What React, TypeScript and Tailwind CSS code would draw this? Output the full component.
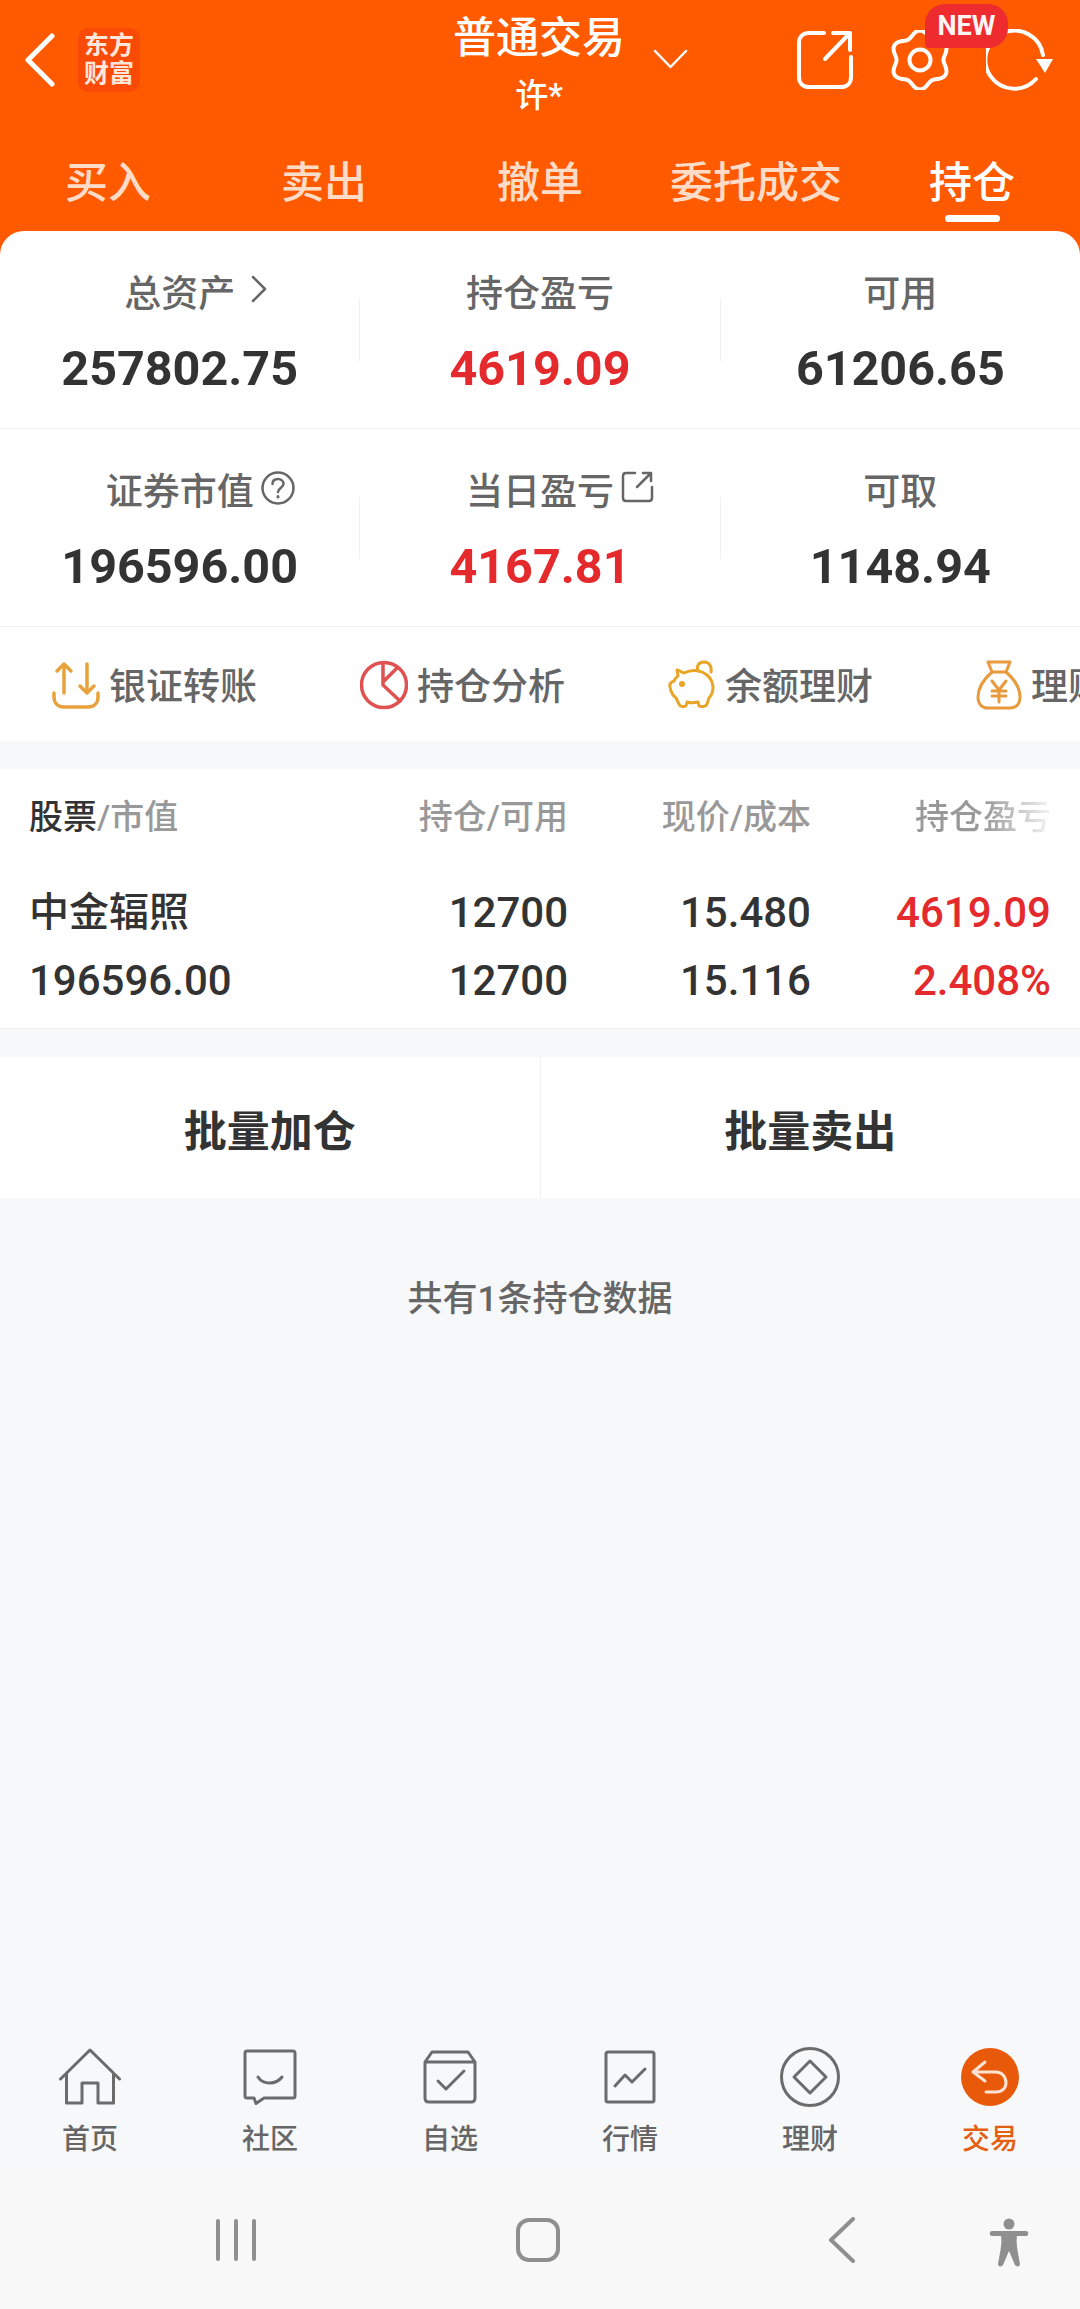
import React from 'react';

const gearPath = (() => {
  const pts: string[] = [];
  for (let i = 0; i <= 120; i++) {
    const t = (i / 120) * Math.PI * 2;
    const r = 26.5 + 3 * Math.cos(6 * t);
    pts.push(`${(31 + r * Math.sin(t)).toFixed(2)} ${(30 - r * Math.cos(t)).toFixed(2)}`);
  }
  return 'M' + pts.join('L') + 'Z';
})();

function Stat({ label, value, red, icon }: { label: string; value: string; red?: boolean; icon?: React.ReactNode }) {
  return (
    <div className="flex-1 flex flex-col items-center pt-[10px]">
      <div className="relative h-[50px] leading-[50px] text-[37px] font-medium text-[#666]">
        {label}
        {icon}
      </div>
      <div className={`mt-[19px] h-[60px] leading-[60px] text-[48.5px] font-bold ${red ? 'text-[#e42a2c]' : 'text-[#333]'}`}>{value}</div>
    </div>
  );
}

function StatRow({ items }: { items: { label: string; value: string; red?: boolean; icon?: React.ReactNode }[] }) {
  return (
    <div className="h-[198px] flex items-center border-b border-[#eeeeee]">
      <Stat {...items[0]} />
      <div className="w-px h-[62px] bg-[#f1f1f1]" />
      <Stat {...items[1]} />
      <div className="w-px h-[62px] bg-[#f1f1f1]" />
      <Stat {...items[2]} />
    </div>
  );
}

function Action({ icon, label }: { icon: React.ReactNode; label: string }) {
  return (
    <div className="flex items-center shrink-0 w-[202px]">
      {icon}
      <span className="ml-[9px] mt-[5px] text-[37px] leading-[48px] text-[#666] font-medium whitespace-nowrap">{label}</span>
    </div>
  );
}

function NavItem({ icon, label, active }: { icon: React.ReactNode; label: string; active?: boolean }) {
  return (
    <div className="flex-1 flex flex-col items-center pt-[2px]">
      <div className="h-[60px] flex items-center justify-center">{icon}</div>
      <div className={`mt-[15px] text-[28px] leading-[36px] font-medium ${active ? 'text-[#e45f12]' : 'text-[#666]'}`}>{label}</div>
    </div>
  );
}

const stroke = { fill: 'none', stroke: '#6b6b6b', strokeWidth: 3, strokeLinecap: 'round', strokeLinejoin: 'round' } as const;

export default function App() {
  return (
    <div className="w-[1080px] h-[2309px] flex flex-col overflow-hidden bg-[#f7f8fa] font-['Roboto','Noto_Sans_CJK_SC',sans-serif]">
      {/* header */}
      <div className="bg-[#ff5a00] h-[231px] shrink-0 text-white">
        <div className="h-[120px] grid grid-cols-[455px_168px_457px]">
          <div className="flex items-center pl-[25px]">
            <svg width="30" height="54" viewBox="0 0 30 54" fill="none" stroke="#fff" strokeWidth="5" strokeLinecap="round" strokeLinejoin="round">
              <path d="M27 3L3 27L27 51" />
            </svg>
            <div className="ml-[23px] w-[62px] h-[64px] rounded-[10px] bg-[#f94a08] flex flex-col items-center justify-center text-[#ffe6da] text-[25px] leading-[28px] font-bold font-['Liberation_Serif','Noto_Sans_CJK_SC',serif]">
              <span>东方</span>
              <span>财富</span>
            </div>
          </div>
          <div className="flex flex-col items-center pt-[13px]">
            <div className="text-[43px] leading-[50px] font-medium whitespace-nowrap">普通交易</div>
            <div className="mt-[13px] text-[33px] leading-[40px] font-medium">许*</div>
          </div>
          <div className="flex items-center">
            <svg className="ml-[30px] mb-[2px]" width="35" height="20" viewBox="0 0 35 20" fill="none" stroke="#fff" strokeWidth="2.5" strokeLinecap="round" strokeLinejoin="round">
              <path d="M2 2L17.5 18L33 2" />
            </svg>
            <svg className="ml-[109px]" width="56" height="60" viewBox="0 0 56 60" fill="none" stroke="#fff" strokeWidth="4" strokeLinecap="round" strokeLinejoin="round">
              <path d="M27 3H12C6 3 2 7 2 13V47C2 53 6 57 12 57H44C50 57 54 53 54 47V27" />
              <path d="M28 29L53 3M36 3H53V20" />
            </svg>
            <svg className="ml-[36px]" width="62" height="60" viewBox="0 0 62 60" fill="none" stroke="#fff" strokeWidth="4">
              <path d={gearPath} strokeLinejoin="round" />
              <circle cx="31" cy="30" r="10.5" />
            </svg>
            <svg className="ml-[35px]" width="68" height="62" viewBox="0 0 68 62" fill="none">
              <path d="M50 50A29 29 0 1 1 57 26" stroke="#fff" strokeWidth="4" strokeLinecap="round" />
              <path d="M50 30H67L59 44Z" fill="#fff" />
            </svg>
            <div className="absolute left-[925px] top-[4px] w-[83px] h-[44px] rounded-[20px] rounded-bl-[4px] bg-[#ee2b2f] flex items-center justify-center text-[27px] font-bold text-[#fff4f4]">NEW</div>
          </div>
        </div>
        <div className="h-[111px] flex">
          {['买入', '卖出', '撤单', '委托成交', '持仓'].map((t, i) => (
            <div key={t} className="flex-1 flex flex-col items-center pt-[37px]">
              <div className={`text-[43px] leading-[52px] font-medium whitespace-nowrap ${i === 4 ? 'text-white' : 'text-[#ffdcc8]'}`}>{t}</div>
              {i === 4 && <div className="mt-[6px] w-[55px] h-[7px] rounded-full bg-white" />}
            </div>
          ))}
        </div>
      </div>

      <div className="bg-[#ff5a00] shrink-0">
        <div className="bg-white rounded-t-[24px]">
          <StatRow
            items={[
              {
                label: '总资产',
                value: '257802.75',
                icon: (
                  <svg className="absolute left-[126px] top-[5px]" width="18" height="28" viewBox="0 0 18 28" fill="none" stroke="#666" strokeWidth="2.5" strokeLinecap="round" strokeLinejoin="round">
                    <path d="M3 2L15 14L3 26" />
                  </svg>
                ),
              },
              { label: '持仓盈亏', value: '4619.09', red: true },
              { label: '可用', value: '61206.65' },
            ]}
          />
          <StatRow
            items={[
              {
                label: '证券市值',
                value: '196596.00',
                icon: (
                  <svg className="absolute left-[155px] top-[3px]" width="34" height="34" viewBox="0 0 34 34" fill="none" stroke="#666" strokeWidth="2.5" strokeLinecap="round">
                    <circle cx="17" cy="17" r="15.5" />
                    <path d="M11.5 13C11.5 9.5 14 8 17 8C20 8 22.5 10 22.5 13C22.5 16.5 17 17 17 21" />
                    <path d="M17 25.5V26" strokeWidth="3" />
                  </svg>
                ),
              },
              {
                label: '当日盈亏',
                value: '4167.81',
                red: true,
                icon: (
                  <svg className="absolute left-[155px] top-[2px]" width="33" height="33" viewBox="0 0 33 33" fill="none" stroke="#666" strokeWidth="2.5" strokeLinecap="round" strokeLinejoin="round">
                    <path d="M14 3H5C3 3 2 4 2 6V28C2 30 3 31 5 31H28C30 31 31 30 31 28V17" />
                    <path d="M16 17L30 3M22 3H30V11" />
                  </svg>
                ),
              },
              { label: '可取', value: '1148.94' },
            ]}
          />
          <div className="h-[114px] flex items-center pl-[52px] pt-[2px] gap-[106px] overflow-hidden">
            <Action
              label="银证转账"
              icon={
                <svg width="48" height="48" viewBox="0 0 48 48" fill="none" stroke="#e8a23c" strokeWidth="3.5" strokeLinecap="round" strokeLinejoin="round" className="shrink-0">
                  <path d="M12 32V3M5 10L12 3L19 10" />
                  <path d="M35 3V32M28 25L35 32L42 25" />
                  <path d="M2 32V36C2 42 6 46 12 46H36C42 46 46 42 46 36V32" />
                </svg>
              }
            />
            <Action
              label="持仓分析"
              icon={
                <svg width="48" height="50" viewBox="0 0 48 50" fill="none" stroke="#e05252" strokeWidth="3.5" strokeLinecap="round" strokeLinejoin="round" className="shrink-0">
                  <circle cx="24" cy="25" r="22.5" />
                  <path d="M23 3V25L40 41M23 22L37 8" />
                </svg>
              }
            />
            <Action
              label="余额理财"
              icon={
                <svg width="48" height="50" viewBox="0 0 48 50" fill="none" stroke="#e8a526" strokeWidth="3" strokeLinecap="round" strokeLinejoin="round" className="shrink-0">
                  <path d="M30 11C28 6 31 2 36 2C41 2 44 6 43 12" />
                  <path d="M9 10C13 11 15 13 16 13C24 9 33 10 39 15C46 21 47 31 41 38L39 44C38 47 33 47 31 46L30 42C26 43 22 43 19 42L18 46C16 47 12 47 11 44L8 38C5 36 4 34 3 31L2 27C1 24 3 22 6 21C7 18 9 17 10 16Z" />
                  <circle cx="14" cy="24" r="1.5" fill="#e8a526" />
                </svg>
              }
            />
            <Action
              label="理财"
              icon={
                <svg width="46" height="50" viewBox="0 0 46 50" fill="none" stroke="#e89a3c" strokeWidth="3" strokeLinecap="round" strokeLinejoin="round" className="shrink-0">
                  <path d="M12 2H34L30 12H16Z" />
                  <path d="M16 12C8 19 2 28 2 37C2 44 6 48 12 48H34C40 48 44 44 44 37C44 28 38 19 30 12" />
                  <path d="M16 21L23 30L30 21M23 30V42M16 31H30M16 36H30" />
                </svg>
              }
            />
          </div>
        </div>
      </div>

      {/* positions */}
      <div className="mt-[28px] h-[260px] shrink-0 bg-white border-b border-[#f0f0f0] text-[#333]">
        <div className="h-[96px] grid grid-cols-[360px_208px_243px_240px] items-center text-[34px] leading-[44px] text-[#999] font-medium">
          <div className="pl-[29px]">
            <span className="text-[#333]">股票</span>/市值
          </div>
          <div className="text-right">持仓/可用</div>
          <div className="text-right">现价/成本</div>
          <div className="text-right bg-[linear-gradient(90deg,#999_72%,#f4f4f4_100%)] bg-clip-text text-transparent">持仓盈亏</div>
        </div>
        <div className="grid grid-cols-[360px_208px_243px_240px] text-[42px] leading-[68px] font-medium pt-[14px]">
          <div className="pl-[29px] text-[40px]">中金辐照</div>
          <div className="text-right">12700</div>
          <div className="text-right">15.480</div>
          <div className="text-right text-[#e42a2c]">4619.09</div>
          <div className="pl-[29px]">196596.00</div>
          <div className="text-right">12700</div>
          <div className="text-right">15.116</div>
          <div className="text-right text-[#e42a2c]">2.408%</div>
        </div>
      </div>

      <div className="mt-[28px] h-[141px] shrink-0 bg-white flex items-center text-[43px] font-bold text-[#333]">
        <div className="flex-1 h-full flex items-center justify-center pt-[9px] border-r border-[#f0f0f0]">批量加仓</div>
        <div className="flex-1 h-full flex items-center justify-center pt-[9px]">批量卖出</div>
      </div>

      <div className="flex-1 pt-[79px] text-center text-[35px] leading-[46px] font-medium text-[#666]">共有1条持仓数据</div>

      {/* bottom tabs */}
      <div className="h-[129px] shrink-0 flex">
        <NavItem
          label="首页"
          icon={
            <svg width="62" height="58" viewBox="0 0 62 58" {...stroke}>
              <path d="M1.5 31L31 2L60.5 31M7.5 25V55H23V35H39V55H54.5V25" />
            </svg>
          }
        />
        <NavItem
          label="社区"
          icon={
            <svg width="54" height="56" viewBox="0 0 54 56" {...stroke}>
              <path d="M4 2H50C51.5 2 52 3 52 4V47C52 48 51.5 49 50 49H21L13 54.5L11 49H4C2.5 49 2 48 2 47V4C2 3 2.5 2 4 2Z" />
              <path d="M15 28C20 36 33 36 39 28" />
            </svg>
          }
        />
        <NavItem
          label="自选"
          icon={
            <svg width="54" height="54" viewBox="0 0 54 54" {...stroke}>
              <path d="M2 12L9 2H45L52 12V48C52 50 51 52 48 52H6C3 52 2 50 2 48ZM2 12H52" />
              <path d="M15 31L23 39L41 21" />
            </svg>
          }
        />
        <NavItem
          label="行情"
          icon={
            <svg width="52" height="54" viewBox="0 0 52 54" {...stroke}>
              <rect x="2" y="2" width="48" height="50" rx="2" />
              <path d="M11 36L21 25L28 32L41 19" />
            </svg>
          }
        />
        <NavItem
          label="理财"
          icon={
            <svg width="60" height="60" viewBox="0 0 60 60" {...stroke}>
              <circle cx="30" cy="30" r="28.5" />
              <path d="M30 14L46 30L30 46L14 30Z" />
            </svg>
          }
        />
        <NavItem
          active
          label="交易"
          icon={
            <svg width="60" height="60" viewBox="0 0 60 60" fill="none" strokeLinecap="round" strokeLinejoin="round">
              <circle cx="30" cy="30" r="29" fill="#e85a0a" />
              <path d="M25 15L13 25L25 34M13 25H36C42 25 46 30 46 36C46 41 42 45 36 45H26" stroke="#ffe3d2" strokeWidth="3" />
            </svg>
          }
        />
      </div>

      {/* system nav */}
      <div className="h-[135px] shrink-0 flex items-center pl-[216px] pb-[4px] bg-[#f8f8f8]">
        <div className="flex gap-[14px]">
          <div className="w-[4px] h-[42px] rounded-full bg-[#8f8f8f]" />
          <div className="w-[4px] h-[42px] rounded-full bg-[#8f8f8f]" />
          <div className="w-[4px] h-[42px] rounded-full bg-[#8f8f8f]" />
        </div>
        <div className="ml-[260px] w-[44px] h-[44px] rounded-[13px] border-[4px] border-[#8f8f8f]" />
        <svg className="ml-[268px]" width="27" height="46" viewBox="0 0 27 46" fill="none" stroke="#8f8f8f" strokeWidth="4" strokeLinecap="round" strokeLinejoin="round">
          <path d="M25 2L3 23L25 44" />
        </svg>
        <svg className="ml-[134px] mt-[6px]" width="40" height="50" viewBox="0 0 40 50" fill="#8f8f8f">
          <circle cx="20" cy="6" r="5.5" />
          <path d="M3 13H37C40 13 40 18 37 18H28C27 25 28 30 31 46C31 49 27 49 26 47L20 33L14 47C13 49 9 49 9 46C12 30 13 25 12 18H3C0 18 0 13 3 13Z" />
        </svg>
      </div>
    </div>
  );
}
